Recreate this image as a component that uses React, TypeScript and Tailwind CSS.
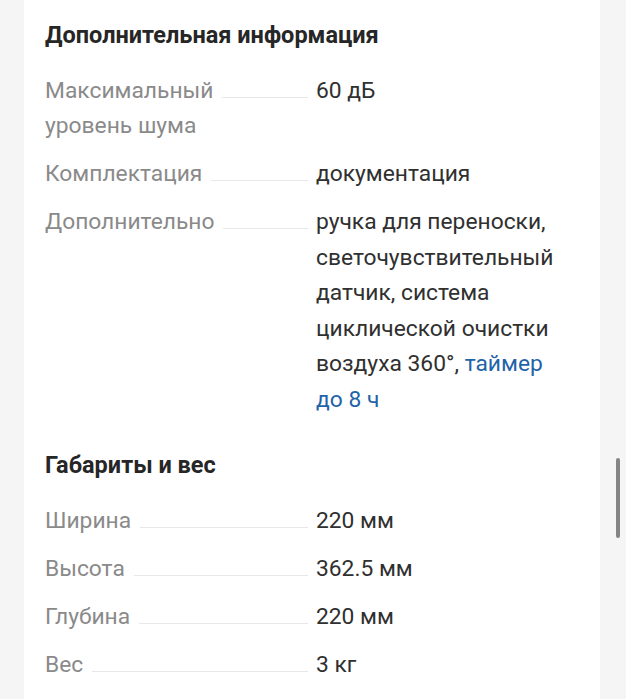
import React from "react";

type Row = { label: React.ReactNode; value: React.ReactNode };

const font = { fontFamily: "Roboto, 'Noto Sans', sans-serif" };

function SpecRow({ label, value }: Row) {
  return (
    <div className="grid grid-cols-[271px_1fr] leading-[35.5px]">
      <div className="flex items-start pr-2">
        <span className="text-[#8a8a8a] whitespace-nowrap">{label}</span>
        <div className="flex-1 ml-[9px] h-[25px] border-b border-[#e8e8e8]" />
      </div>
      <div className="text-[#303030] pr-6">{value}</div>
    </div>
  );
}

function Section({ title, rows, className }: { title: string; rows: Row[]; className?: string }) {
  return (
    <section className={className}>
      <h2 className="text-[23.5px] leading-[30px] font-bold text-[#262626] mb-[22.5px]">{title}</h2>
      <div className="flex flex-col gap-[12.5px]">
        {rows.map((r, i) => (
          <SpecRow key={i} {...r} />
        ))}
      </div>
    </section>
  );
}

export default function App() {
  return (
    <div className="relative w-[626px] h-[699px] bg-[#f5f5f5] overflow-hidden" style={font}>
      <div className="ml-[24px] w-[576px] h-full bg-white pl-[21px] pt-5 text-[22.8px]">
        <Section
          title="Дополнительная информация"
          rows={[
            {
              label: (
                <>
                  Максимальный
                  <br />
                  уровень шума
                </>
              ),
              value: "60 дБ",
            },
            { label: "Комплектация", value: "документация" },
            {
              label: "Дополнительно",
              value: (
                <>
                  ручка для переноски,
                  <br />
                  светочувствительный
                  <br />
                  датчик, система
                  <br />
                  циклической очистки
                  <br />
                  воздуха 360°, <span className="text-[#1f63a8]">таймер</span>
                  <br />
                  <span className="text-[#1f63a8]">до 8 ч</span>
                </>
              ),
            },
          ]}
        />
        <Section
          className="mt-[33px]"
          title="Габариты и вес"
          rows={[
            { label: "Ширина", value: "220 мм" },
            { label: "Высота", value: "362.5 мм" },
            { label: "Глубина", value: "220 мм" },
            { label: "Вес", value: "3 кг" },
          ]}
        />
      </div>
      <div className="absolute left-[616px] top-[458px] w-[4px] h-[80px] rounded-full bg-[#858585]" />
    </div>
  );
}
